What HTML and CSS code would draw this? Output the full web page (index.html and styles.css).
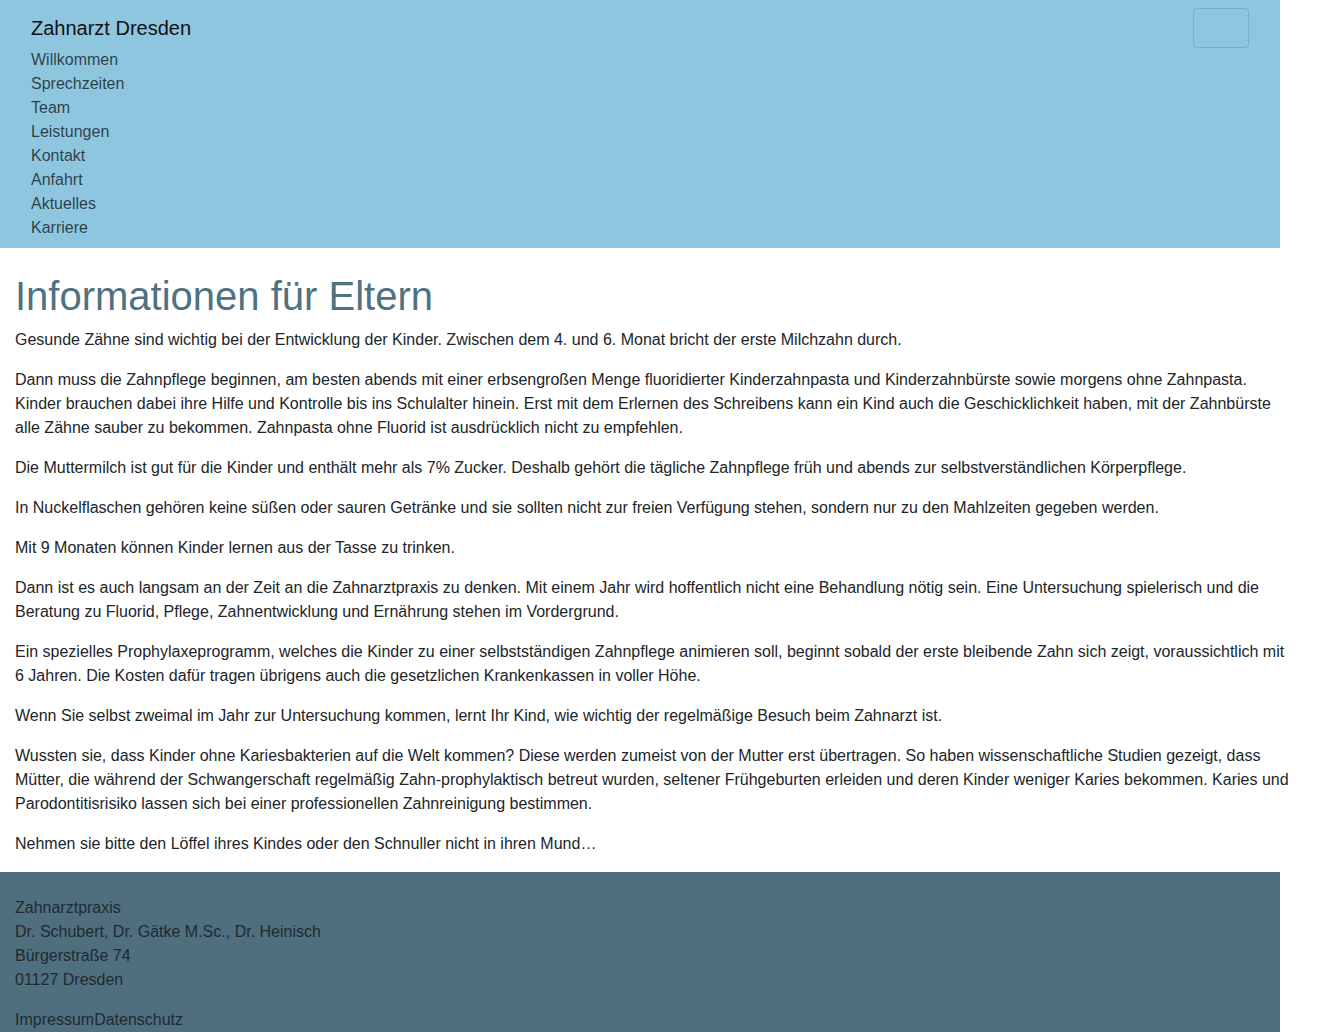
FILE: index.html
```html
<!DOCTYPE html>
<html lang="de">
<head>
<meta charset="utf-8">
<title>Informationen für Eltern – Zahnarzt Dresden</title>
<link rel="stylesheet" href="styles.css">
</head>
<body>
<header class="site-header">
  <nav class="navbar">
    <div class="navbar-top">
      <a class="brand" href="#">Zahnarzt Dresden</a>
      <button class="toggler" type="button" aria-label="Navigation umschalten"></button>
    </div>
    <ul class="nav-list">
      <li><a href="#">Willkommen</a></li>
      <li><a href="#">Sprechzeiten</a></li>
      <li><a href="#">Team</a></li>
      <li><a href="#">Leistungen</a></li>
      <li><a href="#">Kontakt</a></li>
      <li><a href="#">Anfahrt</a></li>
      <li><a href="#">Aktuelles</a></li>
      <li><a href="#">Karriere</a></li>
    </ul>
  </nav>
</header>
<main class="content">
  <h1 class="title">Informationen für Eltern</h1>
  <p>Gesunde Zähne sind wichtig bei der Entwicklung der Kinder. Zwischen dem 4. und 6. Monat bricht der erste Milchzahn durch.</p>
  <p>Dann muss die Zahnpflege beginnen, am besten abends mit einer erbsengroßen Menge fluoridierter Kinderzahnpasta und Kinderzahnbürste sowie morgens ohne Zahnpasta. Kinder brauchen dabei ihre Hilfe und Kontrolle bis ins Schulalter hinein. Erst mit dem Erlernen des Schreibens kann ein Kind auch die Geschicklichkeit haben, mit der Zahnbürste alle Zähne sauber zu bekommen. Zahnpasta ohne Fluorid ist ausdrücklich nicht zu empfehlen.</p>
  <p>Die Muttermilch ist gut für die Kinder und enthält mehr als 7% Zucker. Deshalb gehört die tägliche Zahnpflege früh und abends zur selbstverständlichen Körperpflege.</p>
  <p>In Nuckelflaschen gehören keine süßen oder sauren Getränke und sie sollten nicht zur freien Verfügung stehen, sondern nur zu den Mahlzeiten gegeben werden.</p>
  <p>Mit 9 Monaten können Kinder lernen aus der Tasse zu trinken.</p>
  <p>Dann ist es auch langsam an der Zeit an die Zahnarztpraxis zu denken. Mit einem Jahr wird hoffentlich nicht eine Behandlung nötig sein. Eine Untersuchung spielerisch und die Beratung zu Fluorid, Pflege, Zahnentwicklung und Ernährung stehen im Vordergrund.</p>
  <p>Ein spezielles Prophylaxeprogramm, welches die Kinder zu einer selbstständigen Zahnpflege animieren soll, beginnt sobald der erste bleibende Zahn sich zeigt, voraussichtlich mit 6 Jahren. Die Kosten dafür tragen übrigens auch die gesetzlichen Krankenkassen in voller Höhe.</p>
  <p>Wenn Sie selbst zweimal im Jahr zur Untersuchung kommen, lernt Ihr Kind, wie wichtig der regelmäßige Besuch beim Zahnarzt ist.</p>
  <p>Wussten sie, dass Kinder ohne Kariesbakterien auf die Welt kommen? Diese werden zumeist von der Mutter erst übertragen. So haben wissenschaftliche Studien gezeigt, dass Mütter, die während der Schwangerschaft regelmäßig Zahn-prophylaktisch betreut wurden, seltener Frühgeburten erleiden und deren Kinder weniger Karies bekommen. Karies und Parodontitisrisiko lassen sich bei einer professionellen Zahnreinigung bestimmen.</p>
  <p>Nehmen sie bitte den Löffel ihres Kindes oder den Schnuller nicht in ihren Mund…</p>
</main>
<footer class="site-footer">
  <p class="address">Zahnarztpraxis<br>Dr. Schubert, Dr. Gätke M.Sc., Dr. Heinisch<br>Bürgerstraße 74<br>01127 Dresden</p>
  <p class="legal"><a href="#">Impressum</a><a href="#">Datenschutz</a></p>
</footer>
</body>
</html>
```

FILE: styles.css
```css
* { box-sizing: border-box; }

html, body {
  margin: 0;
  padding: 0;
}

body {
  font-family: "Liberation Sans", Arial, sans-serif;
  font-size: 16px;
  line-height: 24px;
  color: #212529;
  background: #fff;
  width: 1340px;
}

a { text-decoration: none; color: inherit; }

.site-header {
  width: 1280px;
  background: #8ec6e0;
  padding: 0 15px;
}

.navbar {
  padding: 8px 16px;
  display: flex;
  flex-direction: column;
}

.navbar-top {
  display: flex;
  justify-content: space-between;
  align-items: center;
  height: 40px;
}

.brand {
  font-size: 20px;
  line-height: 30px;
  color: #111;
}

.toggler {
  width: 56px;
  height: 40px;
  background: transparent;
  border: 1px solid rgba(0, 0, 0, 0.12);
  border-radius: 4px;
  padding: 0;
}

.nav-list {
  list-style: none;
  margin: 0;
  padding: 0;
  display: flex;
  flex-direction: column;
}

.nav-list a {
  display: block;
  color: rgba(0, 0, 0, 0.7);
  line-height: 24px;
}

.content {
  width: 1310px;
  padding: 24px 15px 0;
  overflow: hidden;
}

.title {
  font-size: 40px;
  font-weight: 500;
  line-height: 48px;
  margin: 0 0 8px;
  color: #4f7282;
}

.content p {
  margin: 0 0 16px;
}

.site-footer {
  width: 1280px;
  background: #4f6f7f;
  padding: 24px 15px 1px;
  color: #1f2a30;
}

.site-footer p {
  margin: 0 0 16px;
}
```
